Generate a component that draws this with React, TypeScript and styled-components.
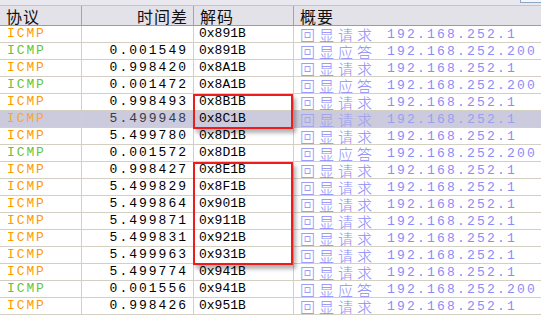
import React from 'react';
import styled, { createGlobalStyle } from 'styled-components';

const GlobalStyle = createGlobalStyle`
  html, body {
    margin: 0;
    padding: 0;
    background: #ffffff;
    overflow: hidden;
  }
`;

const ROW_H = 17;

type Kind = 'req' | 'rep';

const rows: { kind: Kind; time: string; code: string; ip: string }[] = [
  { kind: 'req', time: '', code: '0x891B', ip: '192.168.252.1' },
  { kind: 'rep', time: '0.001549', code: '0x891B', ip: '192.168.252.200' },
  { kind: 'req', time: '0.998420', code: '0x8A1B', ip: '192.168.252.1' },
  { kind: 'rep', time: '0.001472', code: '0x8A1B', ip: '192.168.252.200' },
  { kind: 'req', time: '0.998493', code: '0x8B1B', ip: '192.168.252.1' },
  { kind: 'req', time: '5.499948', code: '0x8C1B', ip: '192.168.252.1' },
  { kind: 'req', time: '5.499780', code: '0x8D1B', ip: '192.168.252.1' },
  { kind: 'rep', time: '0.001572', code: '0x8D1B', ip: '192.168.252.200' },
  { kind: 'req', time: '0.998427', code: '0x8E1B', ip: '192.168.252.1' },
  { kind: 'req', time: '5.499829', code: '0x8F1B', ip: '192.168.252.1' },
  { kind: 'req', time: '5.499864', code: '0x901B', ip: '192.168.252.1' },
  { kind: 'req', time: '5.499871', code: '0x911B', ip: '192.168.252.1' },
  { kind: 'req', time: '5.499831', code: '0x921B', ip: '192.168.252.1' },
  { kind: 'req', time: '5.499963', code: '0x931B', ip: '192.168.252.1' },
  { kind: 'req', time: '5.499774', code: '0x941B', ip: '192.168.252.1' },
  { kind: 'rep', time: '0.001556', code: '0x941B', ip: '192.168.252.200' },
  { kind: 'req', time: '0.998426', code: '0x951B', ip: '192.168.252.1' },
];

const SELECTED = 5;
const marks = [
  { from: 4, to: 5 },
  { from: 8, to: 13 },
];

const Page = styled.div`
  width: 541px;
  height: 317px;
  overflow: hidden;
  display: flex;
  flex-direction: column;
  font-family: 'Liberation Mono', 'Noto Sans CJK SC', monospace;
`;

const TopStrip = styled.div`
  height: 6px;
  flex: none;
  box-sizing: border-box;
  background: #e9e8ee;
  border-bottom: 1px solid #c4c3cc;
  display: flex;
  justify-content: flex-end;
`;

const CornerBox = styled.div`
  width: 21px;
  height: 3px;
  box-sizing: border-box;
  border: 1px solid #8ea6c6;
  border-top: none;
  border-right: none;
  background: #f4f6fa;
`;

const Grid = styled.div`
  display: grid;
  grid-template-columns: 82px 112px 100px 1fr;
`;

const HeadCell = styled.div<{ $right?: boolean }>`
  height: 20px;
  box-sizing: border-box;
  background: #e3e2e9;
  border-right: 1px solid #a3a3a8;
  border-bottom: 1px solid #9b9ba0;
  display: flex;
  align-items: center;
  justify-content: ${(p) => (p.$right ? 'flex-end' : 'flex-start')};
  padding: ${(p) => (p.$right ? '0 5px 0 0' : '0 0 0 6px')};
  font-family: 'Noto Sans CJK SC', sans-serif;
  font-size: 16px;
  line-height: 1;
  letter-spacing: 1px;
  color: #111;
  &:last-child {
    border-right: none;
  }
`;

const Body = styled.div`
  position: relative;
`;

const Cell = styled.div<{ $sel?: boolean }>`
  height: ${ROW_H}px;
  line-height: ${ROW_H - 1}px;
  box-sizing: border-box;
  border-right: 1px solid #d3d0c3;
  border-bottom: 1px solid #d3d0c3;
  background: ${(p) => (p.$sel ? '#cbcbdd' : '#ffffff')};
  display: flex;
  align-items: center;
  white-space: nowrap;
  overflow: hidden;
  &:nth-child(4n) {
    border-right: none;
  }
`;

const Proto = styled(Cell)<{ $kind: Kind }>`
  padding-left: 7px;
  font-size: 13px;
  letter-spacing: 1.9px;
  color: ${(p) => (p.$kind === 'rep' ? '#66c43a' : p.$sel ? '#f4a640' : '#ff9a00')};
`;

const Time = styled(Cell)`
  justify-content: flex-end;
  padding-right: 5px;
  font-size: 13px;
  letter-spacing: 2px;
  color: ${(p) => (p.$sel ? '#3a3a44' : '#000000')};
`;

const Code = styled(Cell)`
  padding-left: 5px;
  font-size: 13px;
  color: #000000;
`;

const Summary = styled(Cell)`
  padding-left: 6px;
  color: ${(p) => (p.$sel ? '#9d9df2' : '#8c8cf8')};
`;

const Zh = styled.span`
  font-family: 'Noto Sans CJK SC', sans-serif;
  font-size: 15px;
  line-height: 15px;
  font-weight: 300;
  letter-spacing: 4px;
  margin-right: 11px;
`;

const Ip = styled.span`
  font-size: 13px;
  line-height: 15px;
  letter-spacing: 2.2px;
`;

const Mark = styled.div`
  position: absolute;
  left: 193px;
  width: 100px;
  box-sizing: border-box;
  border: 2px solid #ee1c1c;
  box-shadow: 3px 4px 4px rgba(0, 0, 0, 0.3);
  pointer-events: none;
`;

export default function App() {
  return (
    <>
      <GlobalStyle />
      <Page>
        <TopStrip>
          <CornerBox />
        </TopStrip>
        <Grid>
          <HeadCell>协议</HeadCell>
          <HeadCell $right>时间差</HeadCell>
          <HeadCell>解码</HeadCell>
          <HeadCell>概要</HeadCell>
        </Grid>
        <Body>
          <Grid>
            {rows.map((r, i) => {
              const sel = i === SELECTED;
              return (
                <React.Fragment key={i}>
                  <Proto $kind={r.kind} $sel={sel}>ICMP</Proto>
                  <Time $sel={sel}>{r.time}</Time>
                  <Code $sel={sel}>{r.code}</Code>
                  <Summary $sel={sel}>
                    <Zh>{r.kind === 'rep' ? '回显应答' : '回显请求'}</Zh>
                    <Ip>{r.ip}</Ip>
                  </Summary>
                </React.Fragment>
              );
            })}
          </Grid>
          {marks.map((m) => (
            <Mark
              key={m.from}
              style={{ top: m.from * ROW_H, height: (m.to - m.from + 1) * ROW_H + 1 }}
            />
          ))}
        </Body>
      </Page>
    </>
  );
}
